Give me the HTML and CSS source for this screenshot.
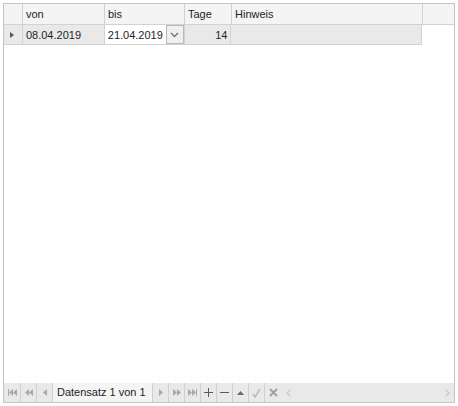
FILE: index.html
```html
<!DOCTYPE html>
<html>
<head>
<meta charset="utf-8">
<link rel="stylesheet" href="styles.css">
</head>
<body>
<div class="grid">
  <div class="head">
    <div class="cell ind"></div>
    <div class="cell c-von">von</div>
    <div class="cell c-bis">bis</div>
    <div class="cell c-tage">Tage</div>
    <div class="cell c-hin">Hinweis</div>
    <div class="cell c-rest"></div>
  </div>
  <div class="row">
    <div class="cell ind"><span class="tri"></span></div>
    <div class="cell c-von">08.04.2019</div>
    <div class="cell c-bis edit"><span class="val">21.04.2019</span><span class="ddbtn"><svg width="9" height="6" viewBox="0 0 9 6"><path d="M1 1 L4.5 4.5 L8 1" fill="none" stroke="#707070" stroke-width="1.3"/></svg></span></div>
    <div class="cell c-tage num">14</div>
    <div class="cell c-hin"></div>
  </div>
  <div class="body"></div>
  <div class="nav">
    <div class="btn first"><svg width="9" height="7" viewBox="0 0 9 7"><rect x="0" y="0" width="1" height="7" fill="#a8a8a8"/><path d="M1 3.5 L5 0 L5 7Z M5 3.5 L9 0 L9 7Z" fill="#a8a8a8"/></svg></div>
    <div class="btn"><svg width="8" height="7" viewBox="0 0 8 7"><path d="M0 3.5 L4 0 L4 7Z M4 3.5 L8 0 L8 7Z" fill="#a8a8a8"/></svg></div>
    <div class="btn"><svg width="4" height="7" viewBox="0 0 4 7"><path d="M0 3.5 L4 0 L4 7Z" fill="#a8a8a8"/></svg></div>
    <div class="navtext">Datensatz 1 von 1</div>
    <div class="btn sepl"><svg width="4" height="7" viewBox="0 0 4 7"><path d="M4 3.5 L0 0 L0 7Z" fill="#a8a8a8"/></svg></div>
    <div class="btn"><svg width="8" height="7" viewBox="0 0 8 7"><path d="M4 3.5 L0 0 L0 7Z M8 3.5 L4 0 L4 7Z" fill="#a8a8a8"/></svg></div>
    <div class="btn"><svg width="9" height="7" viewBox="0 0 9 7"><path d="M4 3.5 L0 0 L0 7Z M8 3.5 L4 0 L4 7Z" fill="#a8a8a8"/><rect x="8" y="0" width="1" height="7" fill="#a8a8a8"/></svg></div>
    <div class="btn"><svg width="9" height="9" viewBox="0 0 9 9"><path d="M4.5 0 V9 M0 4.5 H9" stroke="#5a5a5a" stroke-width="1"/></svg></div>
    <div class="btn"><svg width="9" height="9" viewBox="0 0 9 9"><path d="M0 4.5 H9" stroke="#5a5a5a" stroke-width="1"/></svg></div>
    <div class="btn"><svg width="7" height="4" viewBox="0 0 7 4"><path d="M3.5 0 L7 4 L0 4Z" fill="#6a6a6a"/></svg></div>
    <div class="btn"><svg width="9" height="10" viewBox="0 0 9 10"><path d="M1 6 L3 9 L8 1" fill="none" stroke="#bcbcbc" stroke-width="1.6"/></svg></div>
    <div class="btn nosep"><svg width="9" height="9" viewBox="0 0 9 9"><path d="M1 1 L8 8 M8 1 L1 8" stroke="#a0a0a0" stroke-width="2"/></svg></div>
    <div class="scroll"><svg width="5" height="8" viewBox="0 0 5 8"><path d="M4.5 0.5 L1 4 L4.5 7.5" fill="none" stroke="#c8c8c8" stroke-width="1.3"/></svg></div>
    <div class="spacer"></div>
    <div class="scroll"><svg width="5" height="8" viewBox="0 0 5 8"><path d="M0.5 0.5 L4 4 L0.5 7.5" fill="none" stroke="#c8c8c8" stroke-width="1.3"/></svg></div>
  </div>
</div>
</body>
</html>
```

FILE: styles.css
```css
html, body {
  margin: 0;
  padding: 0;
  background: #ffffff;
}
body {
  padding: 3px;
  font-family: Tahoma, "Liberation Sans", "DejaVu Sans", sans-serif;
  font-size: 11px;
  color: #1e1e1e;
}
.grid {
  width: 450px;
  height: 398px;
  border: 1px solid #c4c4c4;
  display: flex;
  flex-direction: column;
  background: #fff;
}
.head, .row {
  display: flex;
  flex: none;
}
.head {
  height: 21px;
  background: #f4f4f4;
}
.row {
  height: 20px;
  width: 418px;
  background: #e9e9e9;
}
.cell {
  box-sizing: border-box;
  height: 100%;
  border-right: 1px solid #d2d2d2;
  border-bottom: 1px solid #d2d2d2;
  padding: 0 3px;
  line-height: 20px;
  white-space: nowrap;
  overflow: hidden;
}
.head .cell { line-height: 20px; }
.ind { width: 19px; padding: 0; display: flex; align-items: center; justify-content: center; }
.c-von { width: 82px; }
.c-bis { width: 80px; }
.c-tage { width: 47px; }
.c-hin { width: 191px; }
.c-rest { flex: 1; border-right: none; }
.num { text-align: right; padding-right: 3px; }
.tri {
  width: 0;
  height: 0;
  border-top: 3.5px solid transparent;
  border-bottom: 3.5px solid transparent;
  border-left: 4px solid #555;
  margin-left: -2px;
}
.edit {
  background: #ffffff;
  display: flex;
  padding: 0 0 0 3px;
}
.edit .val { flex: 1; }
.ddbtn {
  box-sizing: border-box;
  width: 18px;
  height: 19px;
  border: 1px solid #b9b9b9;
  background: #efefef;
  display: flex;
  align-items: center;
  justify-content: center;
}
.body { flex: 1; }
.nav {
  flex: none;
  height: 19px;
  background: #e9e9e9;
  display: flex;
  align-items: stretch;
}
.btn {
  box-sizing: border-box;
  width: 16px;
  border-right: 1px solid #d0d0d0;
  display: flex;
  align-items: center;
  justify-content: center;
}
.btn.first { width: 17px; }
.btn.nosep { border-right: none; }
.btn.sepl { border-left: 1px solid #d0d0d0; width: 17px; }
.navtext {
  width: 99px;
  padding-left: 4px;
  line-height: 19px;
  background: #f4f4f4;
  color: #1e1e1e;
  box-sizing: border-box;
}
.scroll {
  width: 14px;
  display: flex;
  align-items: center;
  justify-content: center;
}
.spacer { flex: 1; }
```
